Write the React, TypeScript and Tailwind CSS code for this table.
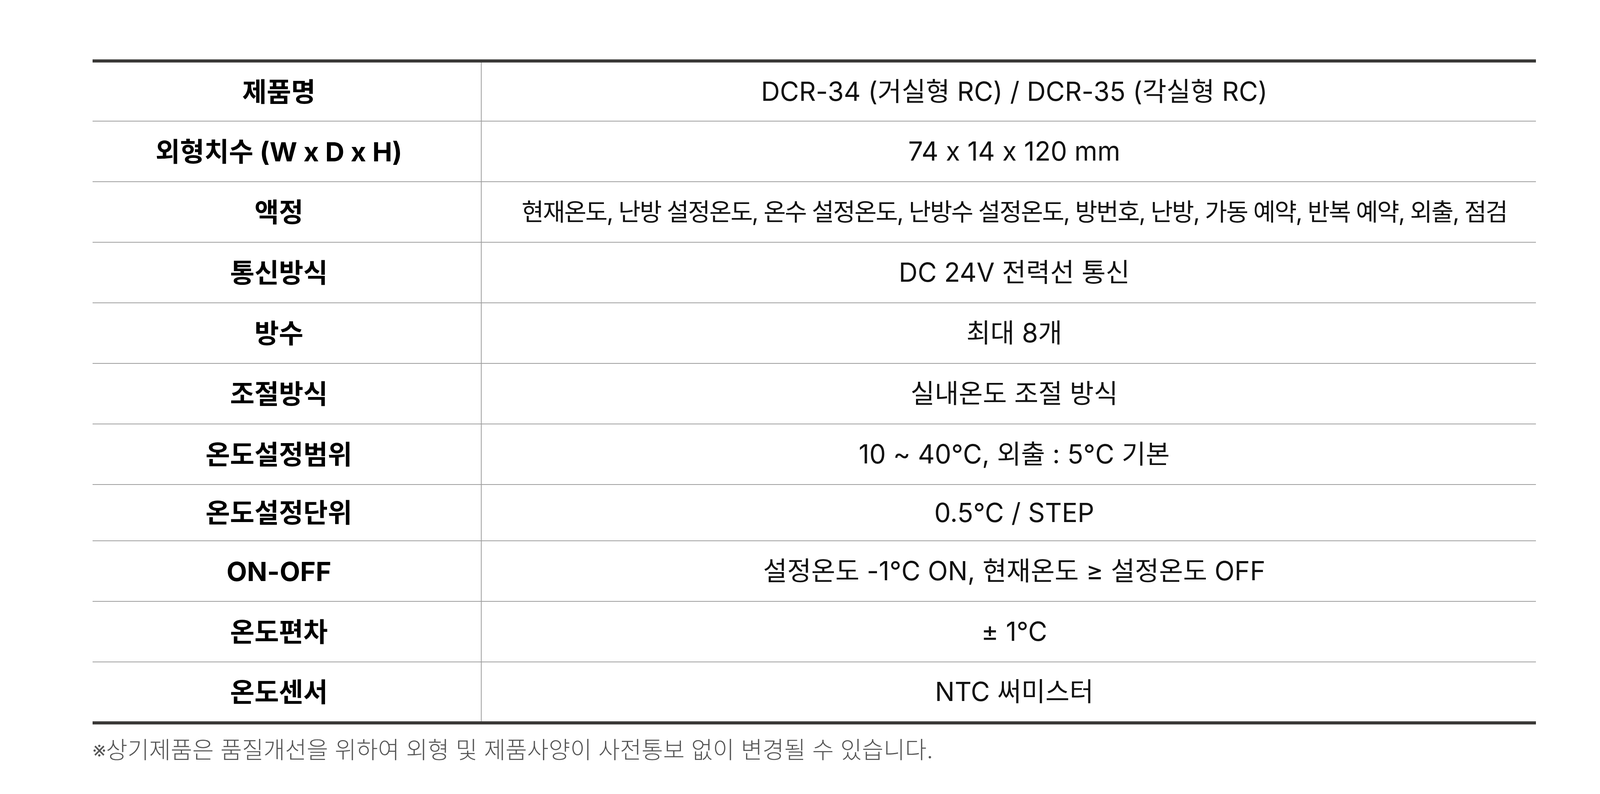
import React from 'react';

type Spec = { label: string; value: string; h: string; last?: boolean; tight?: boolean };

const specs: Spec[] = [
  { label: '제품명', value: 'DCR-34 (거실형 RC) / DCR-35 (각실형 RC)', h: 'h-[151px]' },
  { label: '외형치수 (W x D x H)', value: '74 x 14 x 120 mm', h: 'h-[155px]' },
  {
    label: '액정',
    value: '현재온도, 난방 설정온도, 온수 설정온도, 난방수 설정온도, 방번호, 난방, 가동 예약, 반복 예약, 외출, 점검',
    h: 'h-[155px]',
    tight: true,
  },
  { label: '통신방식', value: 'DC 24V 전력선 통신', h: 'h-[155px]' },
  { label: '방수', value: '최대 8개', h: 'h-[155px]' },
  { label: '조절방식', value: '실내온도 조절 방식', h: 'h-[155px]' },
  { label: '온도설정범위', value: '10 ~ 40°C, 외출 : 5°C 기본', h: 'h-[155px]' },
  { label: '온도설정단위', value: '0.5°C / STEP', h: 'h-[144px]' },
  { label: 'ON-OFF', value: '설정온도 -1°C ON, 현재온도 ≥ 설정온도 OFF', h: 'h-[155px]' },
  { label: '온도편차', value: '± 1°C', h: 'h-[155px]' },
  { label: '온도센서', value: 'NTC 써미스터', h: 'h-[151px]', last: true },
];

export default function App() {
  return (
    <div className="min-h-screen bg-white pt-[152px] pl-[237px] font-['Inter','Noto_Sans_CJK_KR',sans-serif] [font-feature-settings:'calt'_0]">
      <div className="w-[3695px]">
        <div className="border-t-8 border-b-8 border-[#3a3937]">
          {specs.map((s) => (
            <div
              key={s.label}
              className={`flex ${s.h} ${s.last ? '' : 'border-b-2 border-[#9e9e9e]'}`}
            >
              <div className="w-[996px] shrink-0 border-r-2 border-[#9e9e9e] flex items-center justify-center pr-[40px] text-[68px] font-bold text-black">
                {s.label}
              </div>
              <div
                className={`flex-1 flex items-center justify-center pl-[28px] text-[#111] whitespace-nowrap ${
                  s.tight ? 'text-[62px] tracking-[-0.042em]' : 'text-[67px]'
                }`}
              >
                {s.value}
              </div>
            </div>
          ))}
        </div>
        <p className="mt-[20px] text-[60px] font-light text-[#555] leading-[1.5]">
          ※상기제품은 품질개선을 위하여 외형 및 제품사양이 사전통보 없이 변경될 수 있습니다.
        </p>
      </div>
    </div>
  );
}
